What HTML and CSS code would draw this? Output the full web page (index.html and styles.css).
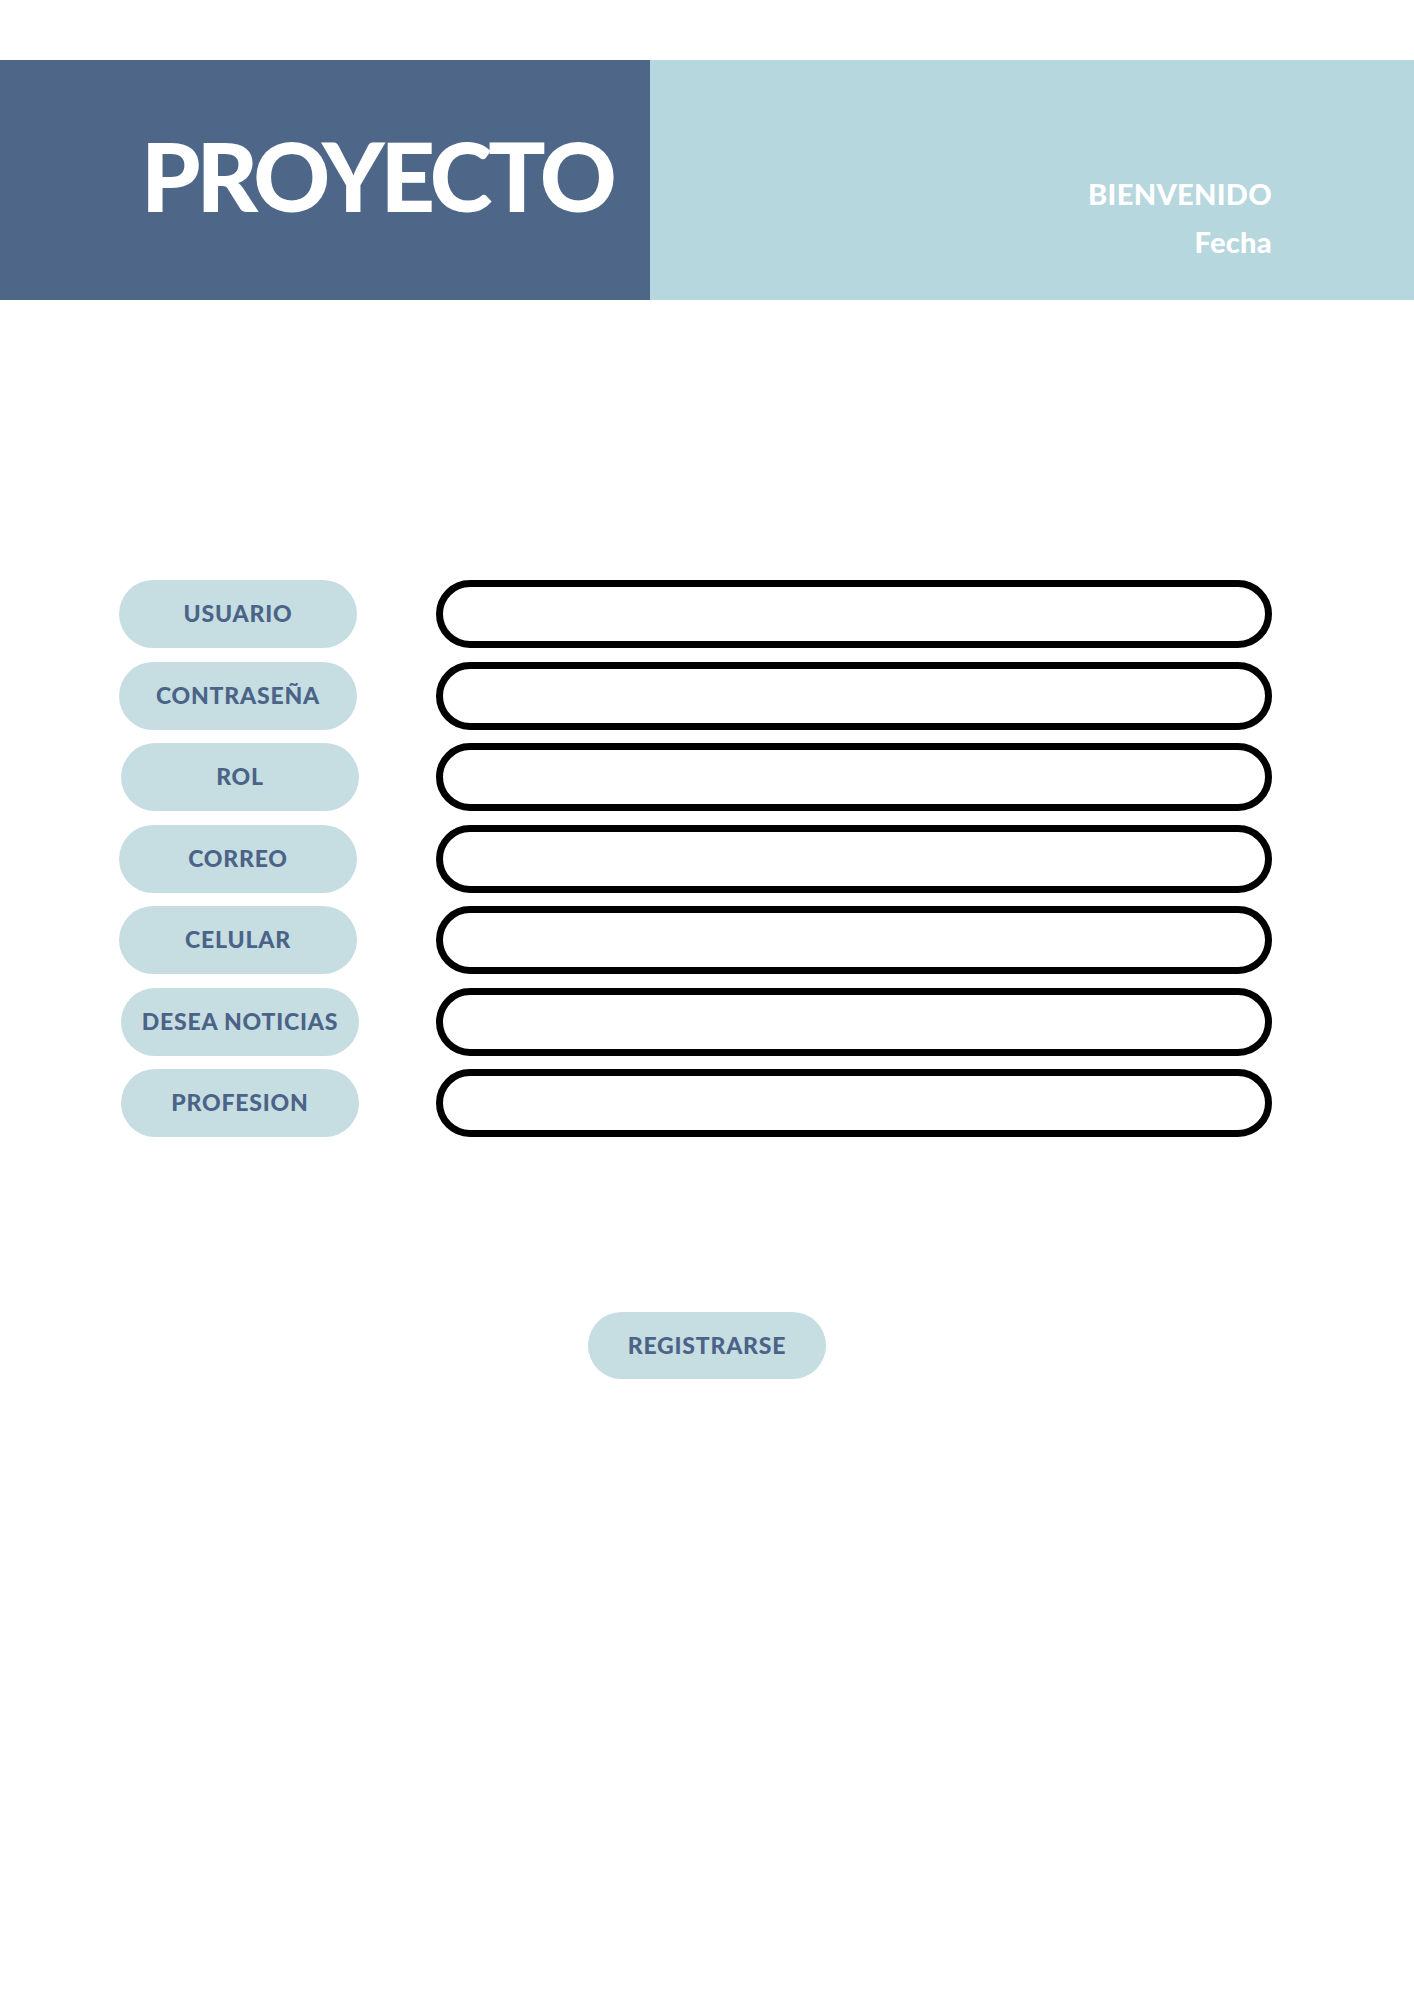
FILE: index.html
```html
<!DOCTYPE html>
<html lang="es">
<head>
<meta charset="utf-8">
<title>Proyecto</title>
<link rel="stylesheet" href="styles.css">
</head>
<body>
<header class="hero">
  <div class="hero-title">
    <h1>PROYECTO</h1>
  </div>
  <div class="hero-info">
    <p>BIENVENIDO</p>
    <p>Fecha</p>
  </div>
</header>
<main class="form">
  <div class="row"><span class="label">USUARIO</span><div class="field"></div></div>
  <div class="row"><span class="label">CONTRASEÑA</span><div class="field"></div></div>
  <div class="row shift"><span class="label">ROL</span><div class="field"></div></div>
  <div class="row"><span class="label">CORREO</span><div class="field"></div></div>
  <div class="row"><span class="label">CELULAR</span><div class="field"></div></div>
  <div class="row shift"><span class="label">DESEA NOTICIAS</span><div class="field"></div></div>
  <div class="row shift"><span class="label">PROFESION</span><div class="field"></div></div>
</main>
<div class="actions">
  <button class="btn" type="button">REGISTRARSE</button>
</div>
</body>
</html>
```
FILE: styles.css
```css
* { box-sizing: border-box; }
html, body { margin: 0; padding: 0; background: #ffffff; }
body { font-family: "Lato", "Open Sans", sans-serif; }

.hero {
  margin-top: 60px;
  height: 240px;
  display: flex;
}
.hero-title {
  width: 650px;
  background: #4e6789;
  padding: 68px 0 0 141px;
}
.hero-title h1 {
  margin: 0;
  font-size: 95px;
  line-height: 1;
  font-weight: 900;
  color: #ffffff;
  letter-spacing: -4px;
}
.hero-info {
  flex: 1;
  background: #b6d7de;
  padding: 110px 142px 0 0;
  text-align: right;
}
.hero-info p {
  margin: 0;
  font-size: 29px;
  line-height: 48px;
  font-weight: 900;
  color: #ffffff;
  letter-spacing: 0.3px;
}

.form {
  margin-top: 280px;
  display: flex;
  flex-direction: column;
  gap: 13.5px;
}
.row {
  display: flex;
  align-items: center;
  padding-left: 119px;
}
.row.shift { padding-left: 121px; }
.row.shift .field { margin-left: 77px; }
.label {
  width: 238px;
  height: 68px;
  border-radius: 34px;
  background: #c6dde2;
  color: #4a6387;
  font-size: 23px;
  font-weight: 900;
  letter-spacing: 0.8px;
  padding-bottom: 2px;
  display: flex;
  align-items: center;
  justify-content: center;
}
.field {
  margin-left: 79px;
  width: 836px;
  height: 68px;
  border: 7px solid #000000;
  border-radius: 34px;
  background: #ffffff;
}

.actions {
  margin-top: 175px;
  display: flex;
  justify-content: center;
}
.btn {
  width: 238px;
  height: 67px;
  border: none;
  border-radius: 34px;
  background: #c6dde2;
  color: #4a6387;
  font-family: "Lato", "Open Sans", sans-serif;
  font-size: 23px;
  font-weight: 900;
  letter-spacing: 0.8px;
  padding: 0 0 2px;
}
```
